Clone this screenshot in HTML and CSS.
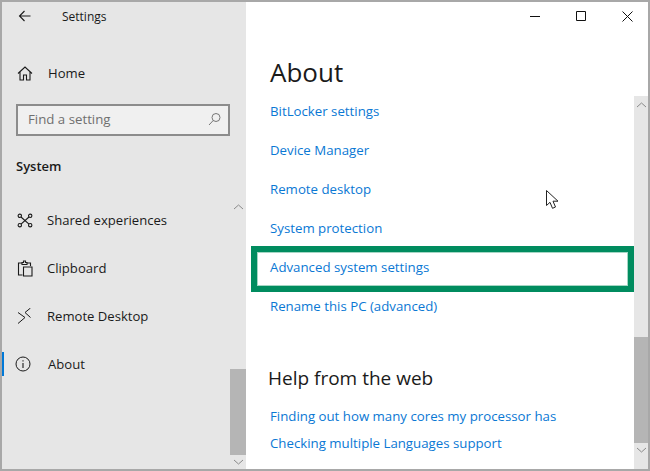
FILE: index.html
```html
<!DOCTYPE html>
<html lang="en">

<head>
    <meta charset="UTF-8">
    <title>Settings</title>
    <link rel="stylesheet" href="styles.css">
</head>

<body>
    <div class="window">
        <aside class="sidebar">
            <div class="nav">
                <div class="app_title">
                    <svg class="back_icon" width="14" height="12" viewBox="0 0 14 12"><path d="M12.500 6H1.500M6.500 1L1.500 6l5 5" fill="none" stroke="#1a1a1a" stroke-width="1.1"/></svg>
                    <span>Settings</span>
                </div>
                <div class="nav_item home_item">
                    <svg width="16" height="15" viewBox="0 0 16 15"><path d="M1 7.500L8 1l7 6.500M3 6v8h3.500V9h3v5H13V6" fill="none" stroke="#1a1a1a" stroke-width="1.1"/></svg>
                    <span>Home</span>
                </div>
                <div class="search_box">
                    <span>Find a setting</span>
                    <svg width="13" height="14" viewBox="0 0 13 14"><circle cx="8" cy="5.500" r="4" fill="none" stroke="#777" stroke-width="1"/><path d="M5.200 8.500L1 13" fill="none" stroke="#777" stroke-width="1"/></svg>
                </div>
                <div class="section_title">System</div>
                <ul class="nav_list">
                    <li class="nav_item">
                        <svg width="16" height="15" viewBox="0 0 16 15"><g fill="none" stroke="#1a1a1a" stroke-width="1.1"><circle cx="2.800" cy="2.800" r="1.700"/><circle cx="13.200" cy="2.800" r="1.700"/><circle cx="2.800" cy="12.200" r="1.700"/><circle cx="13.200" cy="12.200" r="1.700"/><path d="M4 4l8 7.200M12 4l-8 7.200"/></g></svg>
                        <span>Shared experiences</span>
                    </li>
                    <li class="nav_item">
                        <svg width="16" height="17" viewBox="0 0 16 17"><g fill="none" stroke="#1a1a1a" stroke-width="1.1"><path d="M5.500 15H1.500V3H5M10 3h3.500v3"/><path d="M5 4.500V2.500h1.500V1h2v1.500H10v2z"/><path d="M6.500 7h8.500v9H6.500z"/></g></svg>
                        <span>Clipboard</span>
                    </li>
                    <li class="nav_item">
                        <svg width="16" height="17" viewBox="0 0 16 17"><path d="M1 4.500l7 5-7 6M13.500 0L8 4.500l5.500 5" fill="none" stroke="#1a1a1a" stroke-width="1"/></svg>
                        <span>Remote Desktop</span>
                    </li>
                    <li class="nav_item active">
                        <svg width="16" height="16" viewBox="0 0 16 16"><circle cx="8" cy="8" r="7" fill="none" stroke="#1a1a1a" stroke-width="1"/><path d="M8 7v5M8 4.200v1.400" fill="none" stroke="#1a1a1a" stroke-width="1.100"/></svg>
                        <span>About</span>
                    </li>
                </ul>
            </div>
            <div class="side_scroll">
                <svg class="chevron_up" width="11" height="6" viewBox="0 0 11 6"><path d="M1 5l4.500-4L10 5" fill="none" stroke="#8a8a8a"/></svg>
                <div class="side_thumb"></div>
                <svg class="chevron_down" width="11" height="6" viewBox="0 0 11 6"><path d="M1 1l4.500 4L10 1" fill="none" stroke="#8a8a8a"/></svg>
            </div>
        </aside>

        <main class="main">
            <div class="title_buttons">
                <svg width="10" height="10" viewBox="0 0 10 10"><path d="M0 5.500h10" stroke="#111" stroke-width="1"/></svg>
                <svg width="10" height="10" viewBox="0 0 10 10"><path d="M.5.500h9v9h-9z" fill="none" stroke="#111" stroke-width="1"/></svg>
                <svg width="11" height="11" viewBox="0 0 11 11"><path d="M.5.500l10 10M10.500.500l-10 10" stroke="#111" stroke-width="1"/></svg>
            </div>
            <h1>About</h1>
            <div class="body_row">
                <div class="content">
                    <div class="links">
                        <a href="#">BitLocker settings</a>
                        <a href="#">Device Manager</a>
                        <a href="#">Remote desktop</a>
                        <a href="#">System protection</a>
                        <a href="#" class="marked">Advanced system settings</a>
                        <a href="#">Rename this PC (advanced)</a>
                    </div>
                    <h2>Help from the web</h2>
                    <div class="web_links">
                        <a href="#">Finding out how many cores my processor has</a>
                        <a href="#">Checking multiple Languages support</a>
                    </div>
                </div>
                <div class="main_scroll">
                    <svg class="chevron_up" width="11" height="6" viewBox="0 0 11 6"><path d="M1 5l4.500-4L10 5" fill="none" stroke="#8a8a8a"/></svg>
                    <div class="main_thumb"></div>
                    <svg class="chevron_down" width="11" height="6" viewBox="0 0 11 6"><path d="M1 1l4.500 4L10 1" fill="none" stroke="#8a8a8a"/></svg>
                </div>
            </div>
            <svg class="cursor" width="13" height="20" viewBox="0 0 13 20"><path d="M.5.500v15l3.500-3.200 2.500 6 3-1.300-2.500-5.800h5z" fill="#fff" stroke="#222" stroke-width="1"/></svg>
        </main>
    </div>
</body>

</html>
```

FILE: styles.css
```css
* {
    box-sizing: border-box;
}

html,
body {
    margin: 0;
    height: 471px;
    overflow: hidden;
}

body {
    font-family: "Open Sans", "Noto Sans", sans-serif;
    font-size: 13px;
    color: #1a1a1a;
}

.window {
    display: flex;
    width: 650px;
    height: 471px;
    border: 2px solid #a8a8a8;
    background-color: #ffffff;
}

.sidebar {
    display: flex;
    flex: none;
    width: 244px;
    background-color: #e6e6e6;
}

.nav {
    flex: none;
    width: 228px;
}

.app_title {
    display: flex;
    align-items: center;
    height: 30px;
    padding: 0 0 2px 16px;
    font-size: 12px;
}

.back_icon {
    margin-right: 30px;
}

.nav_item {
    position: relative;
    display: flex;
    align-items: center;
    gap: 14px;
    height: 48px;
    padding-left: 15px;
    font-size: 13.1px;
}

.nav_item svg {
    flex: none;
}

.home_item {
    gap: 15px;
    margin-top: 17px;
}

.search_box {
    display: flex;
    align-items: center;
    justify-content: space-between;
    width: 214px;
    height: 32px;
    margin: 7px 0 0 14px;
    padding: 0 7px 2px 10px;
    border: 2px solid #8c8c8c;
    background-color: #f0f0f0;
    color: #6f6f6f;
    font-size: 13.25px;
}

.section_title {
    margin: 21px 0 0 14px;
    line-height: 18px;
    font-weight: 600;
}

.nav_list {
    list-style: none;
    margin: 21px 0 0;
    padding: 0;
}

.active {
    gap: 17px;
}

.active svg {
    margin: -1px 0 0 -2px;
}

.active::before {
    content: "";
    position: absolute;
    left: 0;
    top: 12px;
    width: 2px;
    height: 24px;
    background-color: #0078d7;
}

.side_scroll {
    display: flex;
    flex-direction: column;
    align-items: center;
    flex: none;
    width: 16px;
    padding-top: 202px;
}

.side_thumb {
    width: 16px;
    height: 86px;
    margin-top: 159px;
    background-color: #b5b5b5;
}

.chevron_down {
    margin-top: 4px;
}

.main {
    position: relative;
    display: flex;
    flex-direction: column;
    flex: 1;
    min-width: 0;
}

.title_buttons {
    display: flex;
    justify-content: flex-end;
    gap: 36px;
    height: 30px;
    padding: 9px 15px 0 0;
}

h1 {
    height: 64px;
    margin: 0;
    padding: 19px 0 0 24px;
    font-size: 26px;
    font-weight: 400;
    line-height: 42px;
}

.body_row {
    display: flex;
    flex: 1;
    min-height: 0;
}

.content {
    flex: 1;
    min-width: 0;
    padding: 5px 0 0 24px;
}

.content a {
    color: #0a78d4;
    text-decoration: none;
    font-size: 13.25px;
    line-height: 20px;
}

.links {
    display: flex;
    flex-direction: column;
    gap: 19px;
}

.marked {
    margin: -11px 0 -15px -19px;
    padding: 5px 0 9px 13px;
    border: 6px solid #008c5f;
    box-shadow: inset 0 0 0 1px #a5d6c4;
}

h2 {
    margin: 49px 0 0 -2px;
    font-size: 19px;
    font-weight: 400;
    line-height: 26px;
}

.web_links {
    display: flex;
    flex-direction: column;
    gap: 7px;
    margin-top: 15px;
}

.main_scroll {
    display: flex;
    flex-direction: column;
    align-items: center;
    flex: none;
    width: 14px;
    padding-top: 6px;
    background-color: #e6e6e6;
}

.main_thumb {
    width: 14px;
    height: 106px;
    margin-top: 229px;
    background-color: #b5b5b5;
}

.cursor {
    position: absolute;
    left: 300px;
    top: 188px;
}
```
